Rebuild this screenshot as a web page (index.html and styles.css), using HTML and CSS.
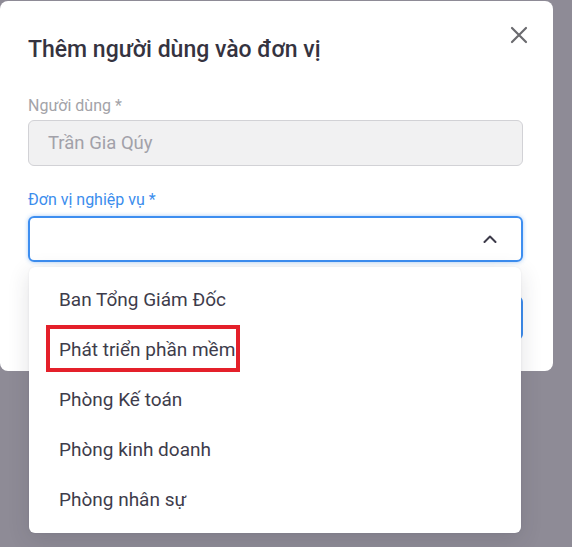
FILE: index.html
```html
<!DOCTYPE html>
<html lang="vi">
<head>
<meta charset="utf-8">
<link rel="stylesheet" href="styles.css">
</head>
<body>
<div class="modal">
  <div class="header">
    <h2 class="title">Thêm người dùng vào đơn vị</h2>
    <button class="close" aria-label="Đóng">
      <svg width="18" height="18" viewBox="0 0 18 18"><path d="M2 2L16 16M16 2L2 16" stroke="#6b6b6f" stroke-width="2.2" stroke-linecap="round"/></svg>
    </button>
  </div>
  <div class="field">
    <label class="label label-disabled">Người dùng *</label>
    <div class="input input-disabled">Trần Gia Qúy</div>
  </div>
  <div class="field field-2">
    <label class="label label-active">Đơn vị nghiệp vụ *</label>
    <div class="input input-select">
      <svg class="chev" width="14" height="8" viewBox="0 0 14 8"><path d="M1.5 7L7 1.5L12.5 7" fill="none" stroke="#3d3b4a" stroke-width="2" stroke-linecap="round" stroke-linejoin="round"/></svg>
    </div>
  </div>
  <div class="footer">
    <button class="btn-primary">Thêm</button>
  </div>
</div>
<ul class="dropdown">
  <li class="item">Ban Tổng Giám Đốc</li>
  <li class="item">Phát triển phần mềm<span class="mark"></span></li>
  <li class="item">Phòng Kế toán</li>
  <li class="item">Phòng kinh doanh</li>
  <li class="item">Phòng nhân sự</li>
</ul>
</body>
</html>
```
FILE: styles.css
```css
* { box-sizing: border-box; }
html, body { margin: 0; padding: 0; }
body {
  width: 572px;
  height: 547px;
  overflow: hidden;
  background: #8e8b96;
  font-family: Roboto, "Noto Sans", sans-serif;
  position: relative;
}
.modal {
  margin-top: 1px;
  width: 553px;
  height: 370px;
  background: #ffffff;
  border-radius: 8px;
  padding: 25px 25px 0 28px;
}
.header {
  display: flex;
  justify-content: space-between;
  align-items: flex-start;
}
.title {
  margin: 10px 0 0 0;
  font-size: 23px;
  line-height: 28px;
  font-weight: 500;
  color: #35333f;
}
.close {
  border: 0;
  background: none;
  padding: 0;
  width: 18px;
  height: 18px;
  display: block;
}
.close svg { display: block; }
.field {
  margin-top: 32px;
  width: 495px;
}
.field-2 { margin-top: 24px; }
.label {
  display: block;
  font-size: 16px;
  line-height: 20px;
}
.label-disabled { color: #a3a3a8; }
.label-active { color: #3b8ded; }
.input {
  margin-top: 4px;
  height: 46px;
  border-radius: 6px;
  display: flex;
  align-items: center;
}
.input-disabled {
  background: #f1f1f2;
  border: 1px solid #d2d2d6;
  padding-left: 19px;
  font-size: 18.5px;
  color: #a2a1a9;
}
.input-select {
  margin-top: 6px;
  height: 46px;
  border: 2px solid #3d8ef0;
  box-shadow: 0 0 4px rgba(61, 142, 240, 0.45);
  justify-content: flex-end;
  padding-right: 24px;
}
.chev { display: block; }
.footer {
  margin-top: 34px;
  width: 495px;
  display: flex;
  justify-content: flex-end;
}
.btn-primary {
  height: 44px;
  width: 110px;
  border: 0;
  border-radius: 6px;
  background: #3d8ef0;
  color: #fff;
  font-family: inherit;
  font-size: 16px;
}
.dropdown {
  position: absolute;
  left: 29px;
  top: 267px;
  width: 492px;
  margin: 0;
  padding: 8px 0;
  list-style: none;
  background: #ffffff;
  border-radius: 6px;
  box-shadow: 0 6px 22px rgba(40, 40, 60, 0.14), 0 0 2px rgba(40, 40, 60, 0.08);
}
.item {
  position: relative;
  height: 50px;
  line-height: 50px;
  padding-left: 30px;
  font-size: 19px;
  color: #3e3c4b;
}
.mark {
  position: absolute;
  left: 17px;
  top: 0;
  width: 194px;
  height: 47px;
  border: 4px solid #e4202a;
}
```
